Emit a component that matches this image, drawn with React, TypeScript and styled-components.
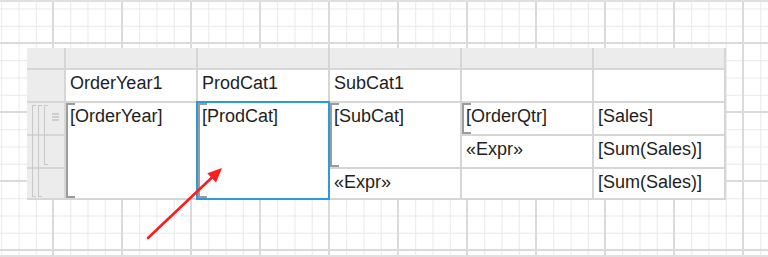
import styled, { createGlobalStyle } from "styled-components"

const GlobalStyle = createGlobalStyle`
  html, body {
    margin: 0;
    padding: 0;
    background: #ffffff;
  }
  * {
    box-sizing: border-box;
  }
`

type Bracket = { $bracket?: boolean; $selected?: boolean }

const App = () => {
  return (
    <>
      <GlobalStyle />
      <Canvas>
        <Tablix>
          {/* top gray handle strip */}
          <Handle />
          <Handle />
          <Handle />
          <Handle />
          <Handle />
          <Handle />

          {/* header row */}
          <RowHandle />
          <Cell>OrderYear1</Cell>
          <Cell>ProdCat1</Cell>
          <Cell>SubCat1</Cell>
          <Cell />
          <Cell />

          {/* data rows */}
          <RowHandle style={{ gridRow: 3 }} />
          <RowHandle style={{ gridRow: 4 }} />
          <RowHandle style={{ gridRow: 5 }} />
          <GroupMarks>
            <GroupBracket $height={92} />
            <GroupBracket $height={92} />
            <GroupBracket $height={60} />
            <MenuIcon width="7" height="8" viewBox="0 0 7 8">
              <path d="M0 1h7M0 4h7M0 7h7" stroke="#b0b0b0" strokeWidth="1" />
            </MenuIcon>
          </GroupMarks>

          <Cell $bracket $col={2} $row="3 / 6">[OrderYear]</Cell>
          <Cell $bracket $selected $col={3} $row="3 / 6">[ProdCat]</Cell>
          <Cell $bracket $col={4} $row="3 / 5">[SubCat]</Cell>
          <Cell $col={4} $row="5">«Expr»</Cell>
          <Cell $bracket $col={5} $row="3">[OrderQtr]</Cell>
          <Cell $col={5} $row="4">«Expr»</Cell>
          <Cell $col={5} $row="5" />
          <Cell $col={6} $row="3">[Sales]</Cell>
          <Cell $col={6} $row="4">[Sum(Sales)]</Cell>
          <Cell $col={6} $row="5">[Sum(Sales)]</Cell>
        </Tablix>

        <Arrow width="768" height="257" viewBox="0 0 768 257">
          <line x1="148" y1="238" x2="213" y2="176.5" stroke="#ff1c1c" strokeWidth="2.6" strokeLinecap="round" />
          <polygon points="222,168 216,182.5 207.3,173.3" fill="#ff1c1c" />
        </Arrow>
      </Canvas>
    </>
  )
}
export default App

const Canvas = styled.div`
  position: relative;
  width: 768px;
  height: 257px;
  overflow: hidden;
  padding: 48px 0 0 27px;
  font-family: "Liberation Sans", Arial, sans-serif;

  // design surface grid
  background-color: #ffffff;
  background-image:
    linear-gradient(to right, #dadada 2px, transparent 2px),
    linear-gradient(to bottom, #dadada 2px, transparent 2px),
    linear-gradient(to right, #e8e8e8 1px, transparent 1px),
    linear-gradient(to bottom, #e8e8e8 1px, transparent 1px);
  background-size: 69px 69px, 69px 69px, 17.25px 17.25px, 17.25px 17.25px;
  background-position: 52px 42px, 52px 42px, 53px 43px, 53px 43px;

  // frame lines
  box-shadow: inset 0 2px 0 #e0e0e0, inset 0 -2px 0 #e0e0e0;
`

const Tablix = styled.div`
  display: grid;
  grid-template-columns: 37px repeat(5, 130px);
  grid-template-rows: 20px 31px 31px 31px 29px;
  gap: 2px;
  padding: 0 2px 2px 0;
  width: fit-content;
  background: #d6d6d6;
`

const Handle = styled.div`
  background: #ececec;
`

const RowHandle = styled.div`
  grid-column: 1;
  background: #ececec;
`

const GroupMarks = styled.div`
  grid-column: 1;
  grid-row: 3 / 6;
  display: flex;
  align-items: flex-start;
  gap: 2px;
  padding: 2px 0 0 5px;
  z-index: 1;
`

const GroupBracket = styled.div<{ $height: number }>`
  width: 4px;
  height: ${(p) => p.$height}px;
  border: 1.5px solid #c8c8c8;
  border-right: none;
`

const MenuIcon = styled.svg`
  margin: 8px 0 0 2px;
`

const Cell = styled.div<Bracket & { $col?: number; $row?: string }>`
  position: relative;
  grid-column: ${(p) => p.$col ?? "auto"};
  grid-row: ${(p) => p.$row ?? "auto"};
  background: #ffffff;
  padding: 3px 4px 0;
  font-size: 18px;
  line-height: 20px;
  color: #1e1e1e;
  white-space: nowrap;
  outline: ${(p) => (p.$selected ? "2px solid #2d9bd7" : "none")};
  z-index: ${(p) => (p.$selected ? 2 : "auto")};

  &::before {
    content: "";
    display: ${(p) => (p.$bracket ? "block" : "none")};
    position: absolute;
    left: 0;
    top: 0;
    bottom: 0;
    width: 7px;
    border: 2px solid #9c9c9c;
    border-right: none;
  }
`

const Arrow = styled.svg`
  position: absolute;
  left: 0;
  top: 0;
  z-index: 5;
  pointer-events: none;
`
